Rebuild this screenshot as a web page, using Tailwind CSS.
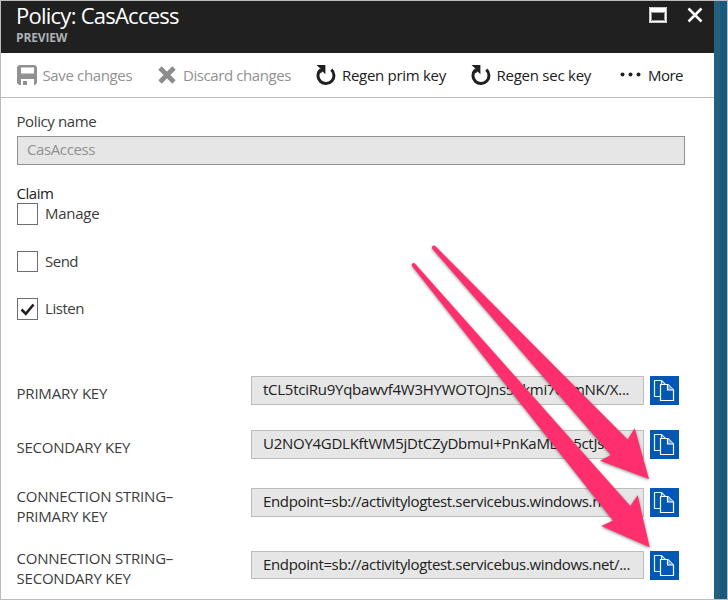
<!DOCTYPE html>
<html lang="en">
<head>
<meta charset="utf-8">
<title>Policy: CasAccess</title>
<script src="https://cdn.jsdelivr.net/npm/@tailwindcss/browser@4"></script>
</head>
<body class="bg-white">
<svg class="hidden">
  <symbol id="copy" viewBox="0 0 29 29"><path d="M10.500 20.500h-6v-16h7l6 6M11.500 4.500v4" fill="none" stroke="#e4f0fc" stroke-width="1.200"/><path d="M10.500 8.500h7.500l5.500 5.500v10.500h-13z" fill="#0058b3" stroke="#fff" stroke-width="1.200"/><path d="M17.500 8.500v5.500h6" fill="#5d9ad8" stroke="#fff" stroke-width="1.200"/></symbol>
  <symbol id="regen" viewBox="0 0 20 21"><path d="M15.300 4.600A8 8 0 1 1 4.300 4.900" fill="none" stroke="#202020" stroke-width="3"/><path d="M.5 0H9.400V9.300L6.600 6.500 4.800 8.300 3 6.500 4.500 3.800z" fill="#202020"/></symbol>
</svg>
<div class="relative w-[728px] h-[600px] overflow-hidden border border-[#bcbcbc] font-['Open_Sans','Noto_Sans',sans-serif] text-[15px] leading-[20px] text-[#3c3c3c] whitespace-nowrap flex">
  <main class="w-[713px] shrink-0">
    <header class="h-[52px] bg-[#202020] pl-[15px] flex justify-between">
      <div>
        <h1 class="text-[22px] leading-[29px] tracking-[-0.75px] text-white">Policy: CasAccess</h1>
        <p class="text-[12px] leading-[16px] font-bold tracking-[-0.15px] text-[#adb0b4]">PREVIEW</p>
      </div>
      <div class="flex gap-[20px] pt-[6px] pr-[11px]">
        <svg class="w-[18px] h-[16px]" viewBox="0 0 18 16"><path d="M0 0h18v16H0zM2 5v9h14V5z" fill="#fff" fill-rule="evenodd"/><path d="M2.500 5.500h13v8h-13z" fill="none" stroke="#999"/><path d="M.5.5h17v15H.5z" fill="none" stroke="#c8c8c8"/></svg>
        <svg class="w-[16px] h-[16px]" viewBox="0 0 16 16"><path d="M1.500 1.500l13 13M14.500 1.500l-13 13" stroke="#fff" stroke-width="2.500"/></svg>
      </div>
    </header>
    <nav class="h-[45px] border-b border-[#bcbcbc] flex items-start pt-[12px] pl-4 text-[#919191]">
      <svg class="w-[20px] h-[20px]" viewBox="0 0 20 20"><path fill="#919191" fill-rule="evenodd" d="M2 0h16l2 2v16l-2 2h-1v-6H4v6H2l-2-2V2zM4 2.500v6h13v-6z"/><path fill="#919191" d="M6 16h4v4H6z"/></svg>
      <span class="ml-[5.5px] w-[89.5px] tracking-[-0.36px]">Save changes</span>
      <svg class="ml-[26px] mt-[1px] w-[18px] h-[18px]" viewBox="0 0 18 18"><path d="M2 2l14 14M16 2L2 16" stroke="#8c8c8c" stroke-width="4.600"/></svg>
      <span class="ml-[7px] w-[109px] tracking-[-0.41px]">Discard changes</span>
      <svg class="ml-[24px] w-[20px] h-[21px]"><use href="#regen"/></svg>
      <span class="ml-[6px] w-[105px] tracking-[-0.29px] text-[#202020]">Regen prim key</span>
      <svg class="ml-[24px] w-[20px] h-[21px]"><use href="#regen"/></svg>
      <span class="ml-[5.5px] w-[94.5px] tracking-[-0.25px] text-[#202020]">Regen sec key</span>
      <svg class="ml-[29px] mt-[7px] w-[21px] h-[5px]" viewBox="0 0 21 5" fill="#202020"><circle cx="2.500" cy="2.500" r="2"/><circle cx="10.500" cy="2.500" r="2"/><circle cx="18.500" cy="2.500" r="2"/></svg>
      <span class="ml-[7px] tracking-[-0.52px] text-[#202020]">More</span>
    </nav>
    <section class="pl-4">
      <div class="-ml-[0.5px] pt-[13px] h-[38px] tracking-[-0.4px]">Policy name</div>
      <div class="w-[668px] h-[29px] bg-[#e6e6e6] border border-[#919191] pl-[9px] pt-[2px] text-[#919191] tracking-[-0.39px]">CasAccess</div>
      <div class="-ml-[0.5px] mt-[18px] h-[20px] tracking-[-0.45px] text-[#202020]">Claim</div>
      <div class="h-[48px] flex"><span class="w-[21px] h-[22px] border border-[#6e6e6e]"></span><span class="ml-[7px] tracking-[-0.25px]">Manage</span></div>
      <div class="h-[47px] flex"><span class="w-[21px] h-[21px] border border-[#6e6e6e]"></span><span class="ml-[7px] tracking-[-0.5px]">Send</span></div>
      <div class="h-[78px] flex"><span class="w-[21px] h-[22px] border border-[#6e6e6e]"><svg class="w-[19px] h-[20px]" viewBox="0 0 19 20"><path d="M3.500 10.500l4.300 4.300L15.500 5.500" fill="none" stroke="#202020" stroke-width="2.600"/></svg></span><span class="ml-[7px] tracking-[-0.45px]">Listen</span></div>

      <div class="h-[54px] flex">
        <div class="-ml-[0.5px] w-[234.5px] pt-[7px] tracking-[-0.2px]">PRIMARY KEY</div>
        <div class="w-[393px] h-[29px] bg-[#e6e6e6] border border-[#bcbcbc] pl-[11px] pt-[2px] tracking-[-0.25px] text-[#202020]">tCL5tciRu9Yqbawvf4W3HYWOTOJns5akmi7ozmNK/X...</div>
        <button class="ml-[6px] w-[29px] h-[29px] bg-[#0058b3]"><svg class="w-[29px] h-[29px]"><use href="#copy"/></svg></button>
      </div>
      <div class="h-[58px] flex">
        <div class="-ml-[0.5px] w-[234.5px] pt-[7px] tracking-[-0.24px]">SECONDARY KEY</div>
        <div class="w-[393px] h-[29px] bg-[#e6e6e6] border border-[#bcbcbc] pl-[11px] pt-[2px] tracking-[-0.27px] text-[#202020]">U2NOY4GDLKftWM5jDtCZyDbmuI+PnKaMBvs5ctJsE...</div>
        <button class="ml-[6px] w-[29px] h-[29px] bg-[#0058b3]"><svg class="w-[29px] h-[29px]"><use href="#copy"/></svg></button>
      </div>
      <div class="h-[63px] flex">
        <div class="-ml-[0.5px] w-[234.5px] -mt-[2px] tracking-[-0.21px]">CONNECTION STRING–<br>PRIMARY KEY</div>
        <div class="w-[393px] h-[29px] bg-[#e6e6e6] border border-[#bcbcbc] pl-[11px] pt-[2px] tracking-[-0.356px] text-[#202020]">Endpoint=sb://activitylogtest.servicebus.windows.net/...</div>
        <button class="ml-[6px] w-[29px] h-[29px] bg-[#0058b3]"><svg class="w-[29px] h-[29px]"><use href="#copy"/></svg></button>
      </div>
      <div class="h-[40px] flex">
        <div class="-ml-[0.5px] w-[234.5px] -mt-[3px] tracking-[-0.21px]">CONNECTION STRING–<br>SECONDARY KEY</div>
        <div class="w-[393px] h-[28px] bg-[#e6e6e6] border border-[#bcbcbc] pl-[11px] pt-[2px] tracking-[-0.356px] text-[#202020]">Endpoint=sb://activitylogtest.servicebus.windows.net/...</div>
        <button class="ml-[6px] w-[29px] h-[29px] bg-[#0058b3]"><svg class="w-[29px] h-[29px]"><use href="#copy"/></svg></button>
      </div>
    </section>
  </main>
  <div class="w-[6px] shrink-0 bg-[#265f7d]"></div>
  <div class="w-[7px] shrink-0 bg-[#165a7d]"></div>
  <svg class="absolute -left-px -top-px w-[728px] h-[600px] pointer-events-none drop-shadow-[0_1px_1.5px_rgba(0,0,0,0.45)]" viewBox="0 0 728 600" fill="#ff2f6d">
    <path d="M432.300 248.700Q431.500 246.500 433 245.700T435.700 246.500L627.700 439.500 634.700 428.300 649 479 600 460.700 611 455z"/>
    <path d="M412 266Q411.200 264 412.700 263.200T415.300 263.900L630.300 506 637.700 495.300 649.700 547.300 601.300 526 613 520.500z"/>
  </svg>
</div>
</body>
</html>
